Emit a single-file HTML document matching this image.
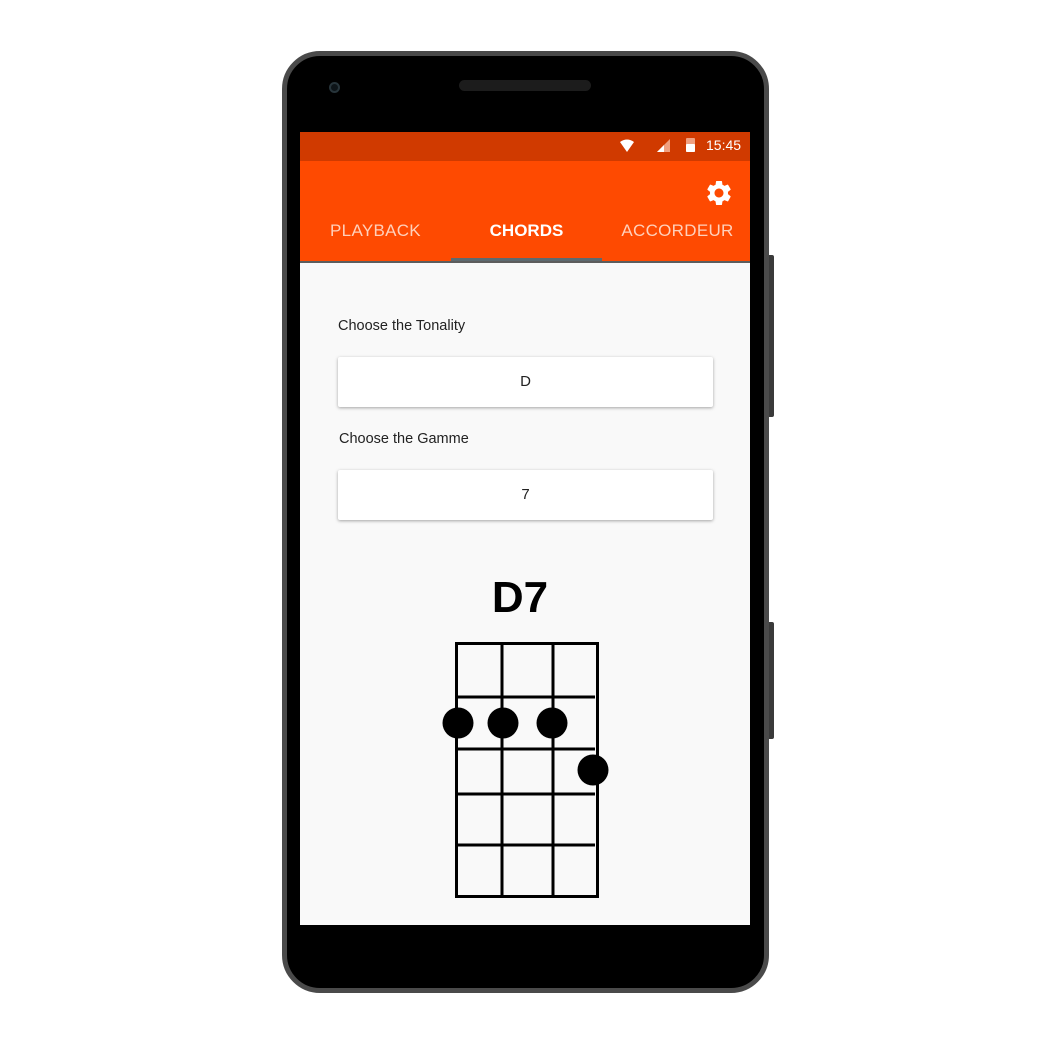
<!DOCTYPE html>
<html><head><meta charset="utf-8"><style>
*{margin:0;padding:0;box-sizing:border-box}
body{width:1050px;height:1050px;background:#fff;position:relative;overflow:hidden;font-family:"Liberation Sans",sans-serif}
.abs{position:absolute}
</style></head><body>
<div class="abs" style="left:769px;top:255px;width:5px;height:162px;background:#3a3a3a;border-radius:0 2px 2px 0"></div>
<div class="abs" style="left:769px;top:622px;width:5px;height:117px;background:#3a3a3a;border-radius:0 2px 2px 0"></div>
<div class="abs" style="left:282px;top:51px;width:487px;height:942px;background:#000;border:5px solid #4a4a4a;border-radius:38px"></div>
<div class="abs" style="left:459px;top:80px;width:132px;height:11px;background:#1c1c1c;border-radius:6px"></div>
<div class="abs" style="left:329px;top:82px;width:11px;height:11px;border-radius:50%;background:#0d1418;border:2px solid #27343a"></div>
<div class="abs" style="left:300px;top:132px;width:450px;height:793px;background:#f9f9f9"></div>
<div class="abs" style="left:300px;top:132px;width:450px;height:29px;background:#d03a00"></div>
<div class="abs" style="left:300px;top:161px;width:450px;height:100px;background:#fe4a01"></div>
<div class="abs" style="left:300px;top:261px;width:450px;height:2px;background:#5d5d5d"></div>
<div class="abs" style="left:451px;top:258px;width:151px;height:3px;background:#5d6a70"></div>
<svg class="abs" style="left:620px;top:136px" width="90" height="20">
<path d="M7 16 L0 6 Q7 1 14 6 Z" fill="#fff"/>
<path d="M37 16 L50 3 L50 16 Z" fill="#f0a080"/><path d="M37 16 L44 9 L44 16 Z" fill="#fff"/>
<rect x="66" y="2" width="9" height="14" rx="1" fill="#f0a080"/><rect x="66" y="8" width="9" height="8" rx="1" fill="#fff"/>
</svg>
<div class="abs" style="left:706px;top:137px;color:#fff;font-size:14px">15:45</div>
<svg class="abs" style="left:704px;top:178px" width="30" height="30" viewBox="0 0 24 24"><path fill="#fff" d="M19.14 12.94c.04-.3.06-.61.06-.94s-.02-.64-.07-.94l2.030-1.58a.49.49 0 0 0 .12-.61l-1.92-3.32a.49.49 0 0 0-.59-.22l-2.39.96c-.5-.38-1.03-.7-1.62-.94l-.36-2.54a.48.48 0 0 0-.48-.41h-3.84c-.24 0-.43.17-.47.41l-.36 2.54c-.59.24-1.13.57-1.620.94l-2.39-.96a.48.48 0 0 0-.59.22L2.74 8.87c-.12.21-.08.47.12.61l2.03 1.58c-.05.3-.09.63-.09.94s.02.64.07.94l-2.03 1.58a.49.49 0 0 0-.12.61l1.92 3.32c.12.22.37.29.59.22l2.39-.96c.5.38 1.03.7 1.62.94l.36 2.54c.05.24.24.41.48.41h3.84c.24 0 .44-.17.47-.41l.36-2.54c.59-.24 1.13-.56 1.62-.94l2.39.96c.22.08.47 0 .59-.22l1.92-3.32c.12-.22.07-.47-.12-.61l-2.01-1.58zM12 15.6c-1.98 0-3.6-1.620-3.6-3.6s1.62-3.6 3.6-3.6 3.6 1.62 3.6 3.6-1.62 3.6-3.6 3.6z"/></svg>
<div class="abs" style="left:300px;top:221px;width:151px;text-align:center;color:#ffd0bb;font-size:17px;letter-spacing:0.3px">PLAYBACK</div>
<div class="abs" style="left:451px;top:221px;width:151px;text-align:center;color:#fff;font-size:17px;font-weight:bold">CHORDS</div>
<div class="abs" style="left:602px;top:221px;width:151px;text-align:center;color:#ffd0bb;font-size:17px;letter-spacing:0.3px">ACCORDEUR</div>
<div class="abs" style="left:338px;top:318px;color:#222;font-size:14.5px">Choose the Tonality</div>
<div class="abs" style="left:338px;top:357px;width:375px;height:50px;background:#fff;border-radius:2px;box-shadow:0 1px 3px rgba(0,0,0,.35);text-align:center;line-height:50px;font-size:15px;color:#222;font-family:'Liberation Sans Narrow','Liberation Sans',sans-serif">D</div>
<div class="abs" style="left:339px;top:431px;color:#222;font-size:14.5px">Choose the Gamme</div>
<div class="abs" style="left:338px;top:470px;width:375px;height:50px;background:#fff;border-radius:2px;box-shadow:0 1px 3px rgba(0,0,0,.35);text-align:center;line-height:50px;font-size:15px;color:#222;font-family:'Liberation Sans Narrow','Liberation Sans',sans-serif">7</div>
<div class="abs" style="left:420px;top:573px;width:200px;text-align:center;font-size:44px;font-weight:bold;color:#000">D7</div>
<svg class="abs" style="left:0;top:0" width="1050" height="1050">
<g stroke="#000" stroke-width="3" fill="none">
<rect x="456.5" y="643.5" width="141" height="253"/>
<line x1="502" y1="643" x2="502" y2="896"/><line x1="553" y1="643" x2="553" y2="896"/>
<line x1="456" y1="697" x2="595" y2="697"/><line x1="456" y1="749" x2="595" y2="749"/>
<line x1="456" y1="794" x2="595" y2="794"/><line x1="456" y1="845" x2="595" y2="845"/>
</g>
<g fill="#000"><circle cx="458" cy="723" r="15.5"/><circle cx="503" cy="723" r="15.5"/><circle cx="552" cy="723" r="15.5"/><circle cx="593" cy="770" r="15.5"/></g>
</svg>
</body></html>
